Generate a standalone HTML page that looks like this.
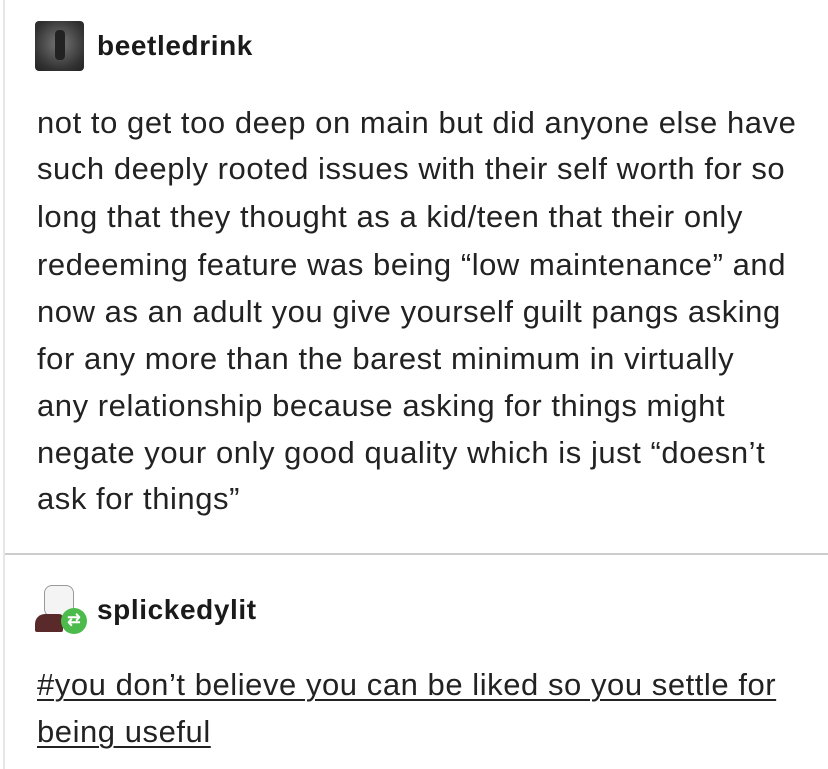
<!DOCTYPE html>
<html><head><meta charset="utf-8"><style>
body{margin:0;width:828px;height:769px;background:#fff;position:relative;overflow:hidden;font-family:"Liberation Sans",Arial,sans-serif;color:#222}
.l{position:absolute;left:37px;font-size:31px;letter-spacing:0.55px;white-space:nowrap;line-height:34px}
.u{position:absolute;left:97px;font-weight:bold;font-size:28px;letter-spacing:0.6px;color:#1a1a1a}
.t{text-decoration:underline;text-decoration-thickness:2px;text-underline-offset:4px}
</style></head><body>
<div style="position:absolute;left:3px;top:0;width:2px;height:769px;background:#e6e6e6"></div>
<div style="position:absolute;left:35px;top:21px;width:49px;height:50px;border-radius:4px;background:radial-gradient(circle at 50% 45%,#777,#333 70%,#222)"></div>
<div style="position:absolute;left:55px;top:30px;width:10px;height:30px;background:#222;border-radius:4px"></div>
<div class="u" style="top:30px">beetledrink</div>
<div class="l" style="top:106px">not to get too deep on main but did anyone else have</div>
<div class="l" style="top:152px">such deeply rooted issues with their self worth for so</div>
<div class="l" style="top:200px">long that they thought as a kid/teen that their only</div>
<div class="l" style="top:248px">redeeming feature was being “low maintenance” and</div>
<div class="l" style="top:295px">now as an adult you give yourself guilt pangs asking</div>
<div class="l" style="top:342px">for any more than the barest minimum in virtually</div>
<div class="l" style="top:389px">any relationship because asking for things might</div>
<div class="l" style="top:436px">negate your only good quality which is just “doesn’t</div>
<div class="l" style="top:482px">ask for things”</div>
<div style="position:absolute;left:5px;top:553px;width:823px;height:2px;background:#ccc"></div>
<div style="position:absolute;left:44px;top:585px;width:28px;height:30px;border:1px solid #999;border-radius:8px;background:#f4f4f4"></div>
<div style="position:absolute;left:35px;top:614px;width:28px;height:18px;background:#5a2a2a;border-radius:10px 4px 2px 2px"></div>
<div style="position:absolute;left:61px;top:608px;width:26px;height:26px;border-radius:50%;background:#4cbb4c;color:#fff;font-size:16px;line-height:26px;text-align:center;font-weight:bold">⇄</div>
<div class="u" style="top:594px">splickedylit</div>
<div class="l t" style="top:668px">#you don’t believe you can be liked so you settle for</div>
<div class="l t" style="top:715px">being useful</div>
</body></html>
